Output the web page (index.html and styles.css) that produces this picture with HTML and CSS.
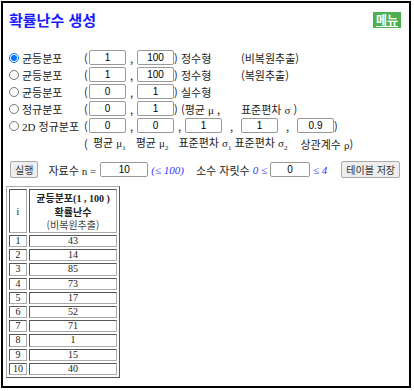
FILE: index.html
```html
<!DOCTYPE html>
<html lang="ko">

<head>
  <meta charset="UTF-8">
  <meta name="viewport" content="width=device-width, initial-scale=1.0">
  <title>확률난수 생성</title>

  <link rel="stylesheet" href="styles.css">
</head>

<body>
  <main class="frame">
    <header class="top">
      <h1>확률난수 생성</h1>
      <a class="menu" href="#">메뉴</a>
    </header>

    <section class="dist">
      <div class="row">
        <input type="radio" name="dist" checked>
        <span class="name">균등분포</span>
        <span class="paren">(</span>
        <input class="num" value="1"><span class="comma">,</span><input class="num" value="100">
        <span class="close">)</span>
        <span class="kind">정수형</span>
        <span class="note">(비복원추출)</span>
      </div>
      <div class="row">
        <input type="radio" name="dist">
        <span class="name">균등분포</span>
        <span class="paren">(</span>
        <input class="num" value="1"><span class="comma">,</span><input class="num" value="100">
        <span class="close">)</span>
        <span class="kind">정수형</span>
        <span class="note">(복원추출)</span>
      </div>
      <div class="row">
        <input type="radio" name="dist">
        <span class="name">균등분포</span>
        <span class="paren">(</span>
        <input class="num" value="0"><span class="comma">,</span><input class="num" value="1">
        <span class="close">)</span>
        <span class="kind">실수형</span>
      </div>
      <div class="row">
        <input type="radio" name="dist">
        <span class="name">정규분포</span>
        <span class="paren">(</span>
        <input class="num" value="0"><span class="comma">,</span><input class="num" value="1">
        <span class="close">)</span>
        <span class="kind">(평균 <i class="gr">μ</i> ,</span>
        <span class="note">표준편차 <i class="gr">σ</i> )</span>
      </div>
      <div class="row">
        <input type="radio" name="dist">
        <span class="name"><span class="serif">2D</span> 정규분포</span>
        <span class="paren">(</span>
        <input class="num" value="0"><span class="comma">,</span><input class="num" value="0"><span class="comma">,</span><input class="num" value="1"><span class="comma wide">,</span><input class="num" value="1"><span class="comma wide">,</span><input class="num" value="0.9">
        <span class="close">)</span>
      </div>
      <div class="row legend">
        <span class="paren">(</span>
        <span>평균 <i class="gr">μ<sub>1</sub></i></span>
        <span>평균 <i class="gr">μ<sub>2</sub></i></span>
        <span>표준편차 <i class="gr">σ<sub>1</sub></i></span>
        <span class="tight">표준편차 <i class="gr">σ<sub>2</sub></i></span>
        <span class="last">상관계수 <i class="gr">ρ</i>)</span>
      </div>
    </section>

    <section class="controls">
      <button class="btn">실행</button>
      <span class="lbl">자료수 <span class="serif">n =</span></span>
      <input class="num count" value="10">
      <span class="hint">(≤ 100)</span>
      <span class="lbl digits">소수 자릿수</span>
      <span class="hint">0 ≤</span>
      <input class="num dec" value="0">
      <span class="hint">≤ 4</span>
      <button class="btn save">테이블 저장</button>
    </section>

    <table class="result">
      <thead>
        <tr>
          <th class="idx">i</th>
          <th class="head">
            <b>균등분포<span class="serif">(1 , 100 )</span></b><br>
            <b>확률난수</b><br>
            <span class="sub">(비복원추출)</span>
          </th>
        </tr>
      </thead>
      <tbody>
        <tr><td>1</td><td>43</td></tr>
        <tr><td>2</td><td>14</td></tr>
        <tr><td>3</td><td>85</td></tr>
        <tr><td>4</td><td>73</td></tr>
        <tr><td>5</td><td>17</td></tr>
        <tr><td>6</td><td>52</td></tr>
        <tr><td>7</td><td>71</td></tr>
        <tr><td>8</td><td>1</td></tr>
        <tr><td>9</td><td>15</td></tr>
        <tr><td>10</td><td>40</td></tr>
      </tbody>
    </table>
  </main>
</body>

</html>
```

FILE: styles.css
```css
body {
  margin: 0;
  font-family: "Noto Sans CJK KR", "Liberation Sans", sans-serif;
  font-size: 11px;
  color: #222;
}

.frame {
  border: 2px solid #000;
  box-sizing: border-box;
  height: 387px;
  margin: 1px 0 0 1px;
  padding: 6px 8px 0 4px;
  width: 410px;
}

.top {
  align-items: center;
  display: flex;
  justify-content: space-between;
}

h1 {
  color: #1a1aff;
  font-size: 15px;
  font-weight: bold;
  margin: 0 0 0 2px;
}

.menu {
  background: #4caf50;
  color: #fff;
  font-size: 12px;
  font-weight: bold;
  line-height: 16px;
  padding: 0 3px;
  text-decoration: underline;
}

.dist {
  margin-top: 19px;
}

.row {
  align-items: center;
  display: flex;
  height: 17px;
  white-space: nowrap;
}

.row input[type=radio] {
  height: 10px;
  margin: 0 3px 0 2px;
  width: 10px;
}

.name {
  width: 62px;
}

.paren {
  width: 5px;
}

.close {
  width: 4px;
}

.comma {
  text-align: center;
  width: 11px;
}

.comma.wide {
  width: 19px;
}

.num {
  border: 1px solid #999;
  border-radius: 2px;
  box-sizing: border-box;
  font-family: "Liberation Sans", sans-serif;
  font-size: 10px;
  height: 15px;
  padding: 0;
  text-align: center;
  width: 37px;
}

.kind {
  padding-left: 3px;
  width: 60px;
}

.gr,
.serif {
  font-family: "Liberation Serif", serif;
  font-style: normal;
}

sub {
  font-size: 7px;
}

.legend {
  gap: 10px;
  margin-top: 1px;
  padding-left: 77px;
}

.legend .paren {
  margin-right: -6px;
}

.legend .tight {
  margin-left: -7px;
}

.legend .last {
  margin-left: 3px;
}

.controls {
  align-items: center;
  display: flex;
  margin-top: 9px;
  white-space: nowrap;
}

.btn {
  background: #eee;
  border: 1px solid #aaa;
  border-radius: 2px;
  color: #333;
  font-family: "Noto Sans CJK KR", sans-serif;
  font-size: 10px;
  height: 17px;
  line-height: 13px;
  margin: 0 0 0 3px;
  padding: 0 4px;
}

.lbl {
  margin-left: 10px;
  margin-right: 4px;
}

.count {
  width: 48px;
}

.hint {
  color: #3333ff;
  font-family: "Liberation Serif", serif;
  font-style: italic;
  margin: 0 3px;
}

.digits {
  margin-left: 9px;
  margin-right: 0;
}

.dec {
  width: 40px;
}

.save {
  margin-left: 11px;
}

.result {
  border: 1px outset #aaa;
  border-spacing: 2px;
  font-family: "Liberation Serif", serif;
  font-size: 10px;
  margin: 8px 0 0 -1px;
  text-align: center;
}

.result th,
.result td {
  border: 1px inset #aaa;
  line-height: 10.2px;
  padding: 0;
}

.result th {
  font-weight: normal;
  line-height: 13px;
  padding: 1px 0;
}

.idx {
  width: 16px;
}

.head {
  font-family: "Noto Sans CJK KR", sans-serif;
  width: 86px;
}

.sub {
  color: #444;
}
```
